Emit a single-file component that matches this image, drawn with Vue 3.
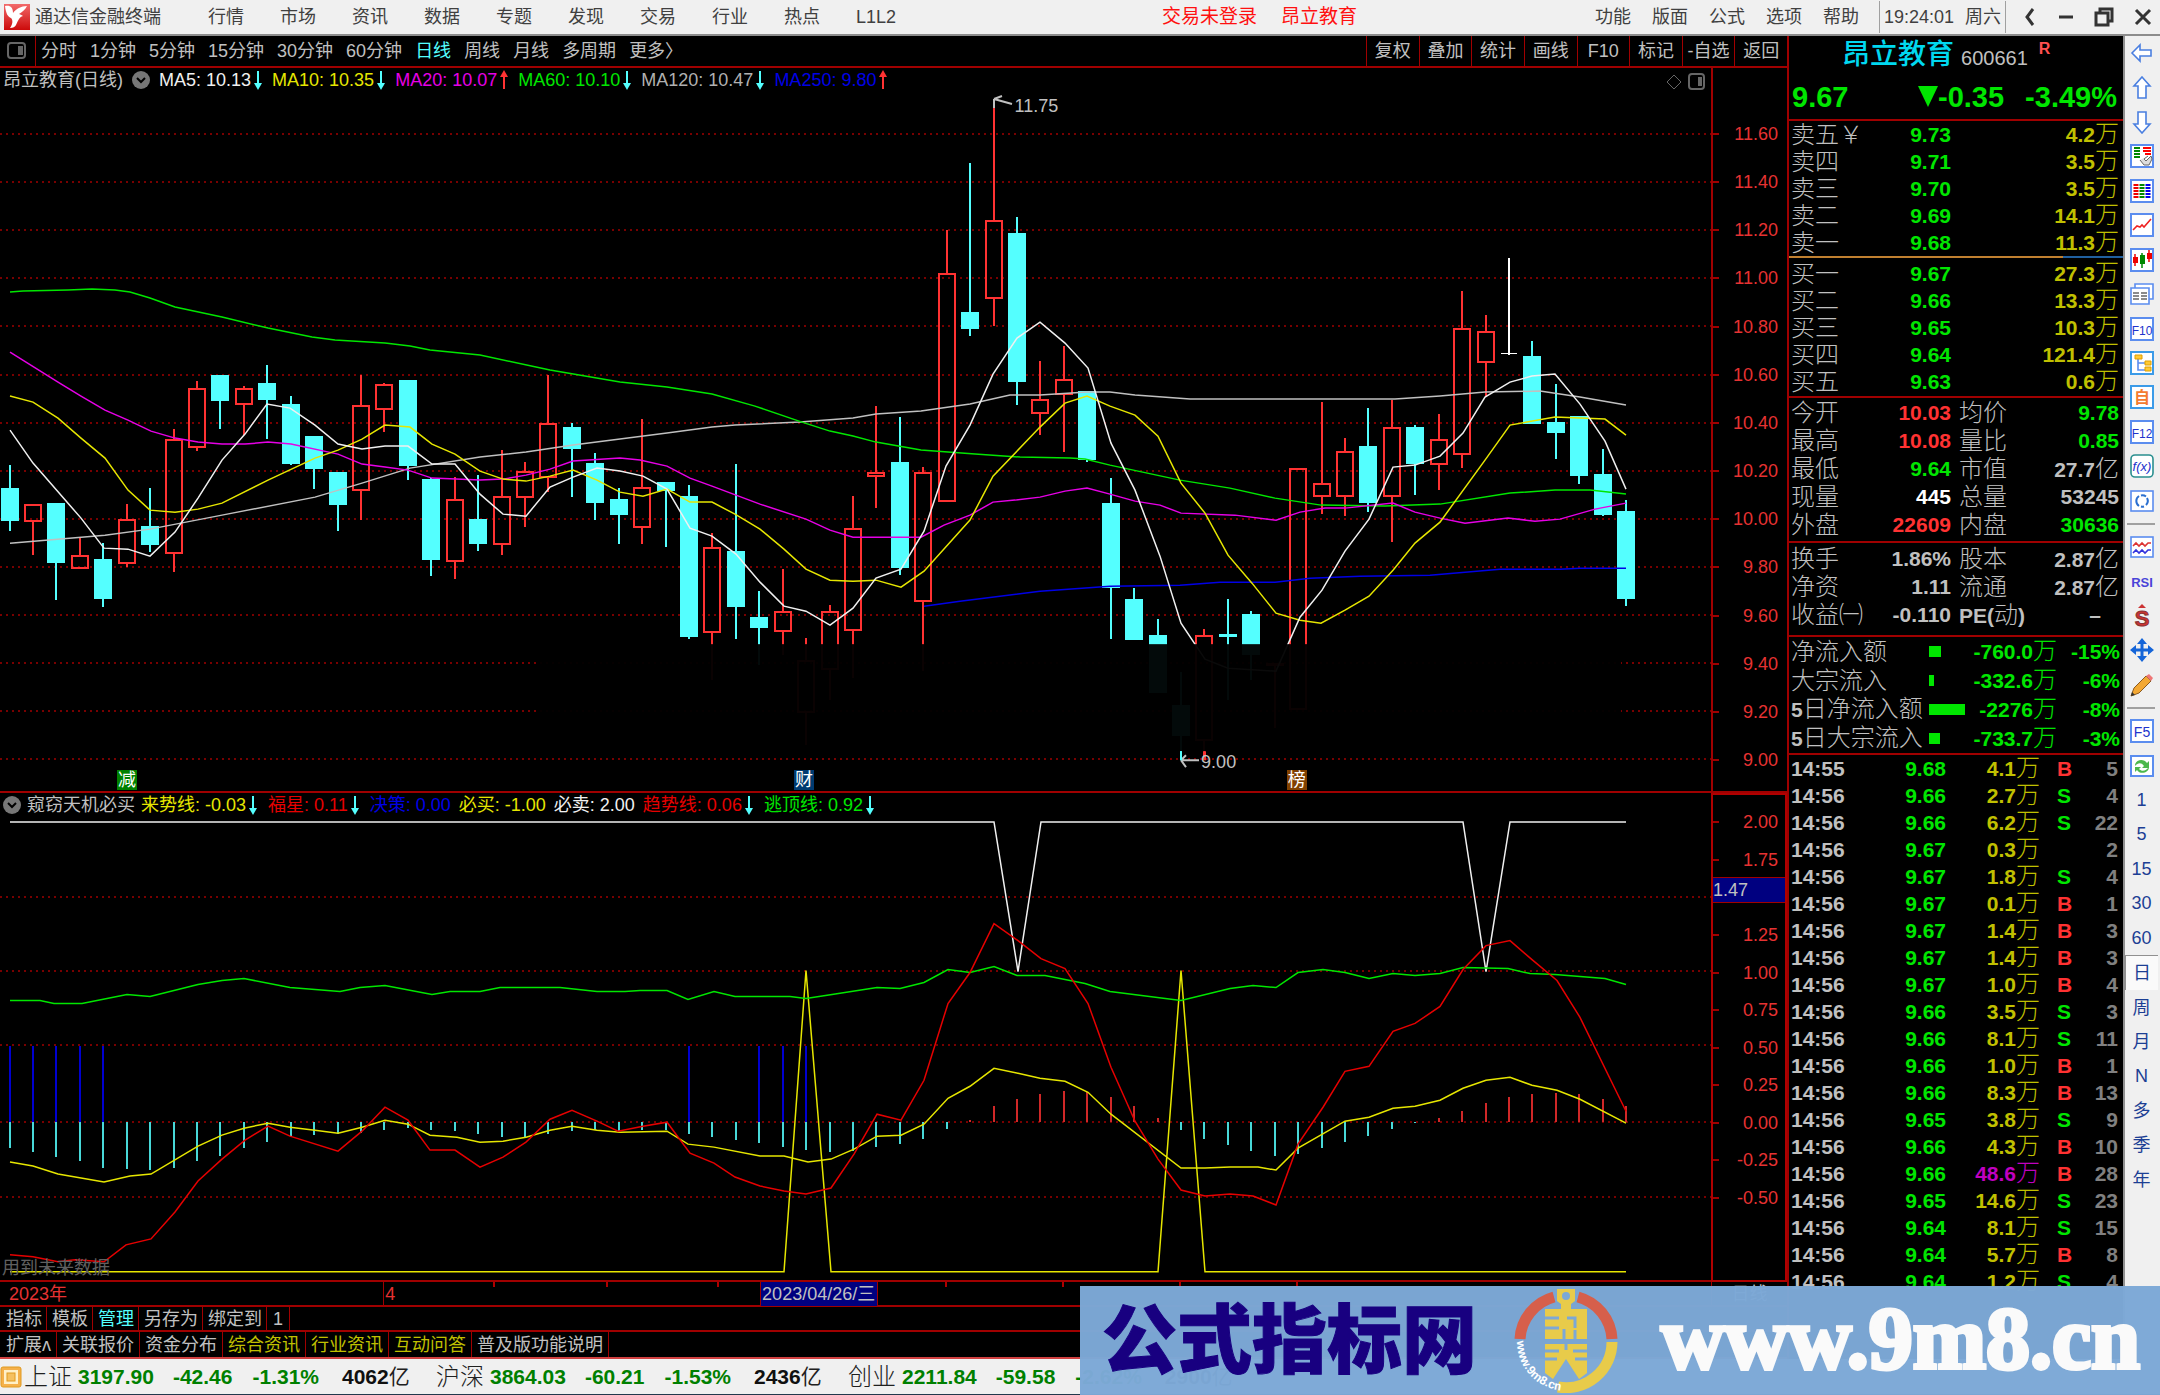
<template>
  <div class="terminal">
    <header class="menu-bar">
      <svg class="brand-icon" width="26" height="26" viewBox="0 0 26 26">
        <defs>
          <linearGradient id="brand-fill" x1="0" y1="0" x2="0" y2="1">
            <stop offset="0" stop-color="#f26a6a" />
            <stop offset="1" stop-color="#cc0a0a" />
          </linearGradient>
        </defs>
        <rect width="26" height="26" fill="url(#brand-fill)" />
        <path d="M1 2c5-1 8 1 8 7 3-4 8-7 14-7-2 4-5 6-8 8 2 1 3 1 4 2-4 1-5 5-7 9-1 2-3 3-6 3 3-4 3-8 1-10-3-1-5-4-6-12z" fill="#fff" />
      </svg>
      <span class="brand">通达信金融终端</span>
      <nav class="menus">
        <button v-for="m in menus" :key="m">{{ m }}</button>
      </nav>
      <div class="login">
        <span>交易未登录</span>
        <span>昂立教育</span>
      </div>
      <nav class="menus right">
        <button v-for="m in rightMenus" :key="m">{{ m }}</button>
      </nav>
      <div class="clock"><span>19:24:01</span><span>周六</span></div>
      <div class="window-buttons">
        <button aria-label="收起"><svg width="16" height="20" viewBox="0 0 16 20"><path d="M11 2L5 10l6 8" /></svg></button>
        <button aria-label="最小化"><svg width="16" height="20" viewBox="0 0 16 20"><path d="M1 10h14" /></svg></button>
        <button aria-label="还原"><svg width="20" height="20" viewBox="0 0 20 20"><path d="M6 6V2h12v12h-4M2 6h12v12H2z" /></svg></button>
        <button aria-label="关闭"><svg width="18" height="20" viewBox="0 0 18 20"><path d="M2 3l14 14M16 3L2 17" /></svg></button>
      </div>
    </header>

    <div class="body">
      <main class="workspace">
        <div class="toolbar">
          <button class="layout-toggle" aria-label="侧栏">
            <svg width="20" height="18" viewBox="0 0 20 18"><rect x="1" y="1" width="17" height="15" rx="3" fill="none" stroke="#666" stroke-width="2" /><rect x="11" y="4" width="5" height="9" fill="#666" /></svg>
          </button>
          <nav class="periods">
            <button v-for="p in periods" :key="p" :class="{ active: p === activePeriod }" @click="activePeriod = p">{{ p }}</button>
          </nav>
          <div class="tools">
            <button v-for="t in tools" :key="t">{{ t }}</button>
          </div>
        </div>

        <section class="pane main-pane">
          <div class="plot">
            <svg class="canvas" viewBox="0 68 1711 723" preserveAspectRatio="none">
              <line v-for="y in mainGrid" :key="y" class="grid" x1="0" x2="1711" :y1="y" :y2="y" />
              <g v-for="c in candleShapes" :key="c.x" :class="['candle', c.kind]">
                <line :x1="c.x" :x2="c.x" :y1="c.high" :y2="c.top" />
                <line :x1="c.x" :x2="c.x" :y1="c.bottom" :y2="c.low" />
                <rect :x="c.x - 8" :y="c.top" width="16" :height="c.height" />
              </g>
              <polyline v-for="l in mainLines" :key="l.color" class="curve" :points="l.points" :stroke="l.color" />
              <rect x="538" y="644" width="1083" height="107" fill="#000" opacity="0.96" />
              <path class="pointer" d="M994 99l18 5M994 99v9M994 99l8-3" />
              <path class="pointer" d="M1181 760h18M1181 760l5-5M1181 760l5 7" />
              <path d="M1181 751v9" stroke="#54ffff" stroke-width="2" />
              <path d="M1205 751v9" stroke="#ff3232" stroke-width="2" />
            </svg>
            <div class="legend">
              <span class="title">昂立教育(日线)</span>
              <button class="round" aria-label="指标菜单"><svg width="18" height="18" viewBox="0 0 18 18"><circle cx="9" cy="9" r="9" fill="#777" /><path d="M5 7l4 4 4-4" fill="none" stroke="#000" stroke-width="2" /></svg></button>
              <span v-for="l in mainLegend" :key="l.text" class="entry" :class="l.color">
                {{ l.text }}<svg v-if="l.dir" class="arrow" :class="l.dir" width="10" height="20" viewBox="0 0 10 20"><path d="M5 1v14" /><path class="tip" d="M1 13h8l-4 7z" /></svg>
              </span>
            </div>
            <div class="corner">
              <svg width="40" height="18" viewBox="0 0 40 18" fill="none" stroke="#666" stroke-width="2"><path d="M8 2l7 7-7 7-7-7z" stroke-width="1" /><rect x="23" y="1" width="15" height="15" rx="3" /><path d="M34 4v9" stroke-width="4" /></svg>
            </div>
            <span class="price-note high">11.75</span>
            <span class="price-note low">9.00</span>
            <span v-for="f in flags" :key="f.text" class="flag" :class="f.kind" :style="{ left: f.left }">{{ f.text }}</span>
          </div>
          <ul class="axis">
            <li v-for="v in mainAxis" :key="v">{{ v }}</li>
          </ul>
        </section>

        <section class="pane sub-pane">
          <div class="plot">
            <span class="future-note">用到未来数据</span>
            <svg class="canvas" viewBox="0 793 1711 488" preserveAspectRatio="none">
              <line v-for="y in subGrid" :key="y" class="grid" x1="0" x2="1711" :y1="y" :y2="y" />
              <line v-for="i in blueBars" :key="'b' + i" :x1="barX(i)" :x2="barX(i)" y1="1047" y2="1123" class="bar blue" />
              <line v-for="(y, i) in momentum" :key="i" :x1="barX(i)" :x2="barX(i)" y1="1123" :y2="y" class="bar" :class="y > 1123 ? 'down' : 'up'" />
              <polyline v-for="l in subLines" :key="l.points" class="curve" :points="l.points" :stroke="l.color" />
            </svg>
            <div class="legend">
              <button class="round" aria-label="指标菜单"><svg width="18" height="18" viewBox="0 0 18 18"><circle cx="9" cy="9" r="9" fill="#777" /><path d="M5 7l4 4 4-4" fill="none" stroke="#000" stroke-width="2" /></svg></button>
              <span class="title">窥窃天机必买</span>
              <span v-for="l in subLegend" :key="l.text" class="entry" :class="l.color">
                {{ l.text }}<svg v-if="l.dir" class="arrow" :class="l.dir" width="10" height="20" viewBox="0 0 10 20"><path d="M5 1v14" /><path class="tip" d="M1 13h8l-4 7z" /></svg>
              </span>
            </div>
          </div>
          <div class="axis-box">
            <ul class="axis">
              <li v-for="v in subAxis" :key="v">{{ v }}</li>
            </ul>
            <span class="cursor-value">1.47</span>
          </div>
        </section>

        <div class="date-row">
          <div class="dates">
            <span class="year">2023年</span>
            <span class="month">4</span>
            <span class="current">2023/04/26/三</span>
            <svg class="date-ticks" viewBox="0 0 1711 24" preserveAspectRatio="none"><path d="M494 0v5M607 0v5M718 0v5M946 0v5M1063 0v5M1180 0v5M1297 0v5" stroke="#b00000" stroke-width="2" /></svg>
          </div>
          <div class="date-end">日线</div>
        </div>
        <div class="tab-row first">
          <button v-for="t in indicatorTabs" :key="t" :class="{ active: t === '管理' }">{{ t }}</button>
        </div>
        <div class="tab-row second">
          <button v-for="t in infoTabs" :key="t.text" :class="{ hot: t.hot }">{{ t.text }}</button>
        </div>
      </main>

      <aside class="quote">
        <div class="stock-name">
          <h1>昂立教育</h1>
          <span class="code">600661</span>
          <sup>R</sup>
        </div>
        <div class="stock-price">
          <span>9.67</span>
          <span class="change"><svg width="20" height="21" viewBox="0 0 20 21"><path d="M0 0h20L10 21z" fill="#00e600" /></svg>-0.35</span>
          <span class="percent">-3.49%</span>
        </div>
        <table class="levels">
          <tbody>
            <tr v-for="r in sells" :key="r[0]">
              <th>{{ r[0] }}</th>
              <td class="green price">{{ r[1] }}</td>
              <td class="gold">{{ r[2] }}<i>万</i></td>
            </tr>
          </tbody>
        </table>
        <div class="balance"><span></span><span></span></div>
        <table class="levels buy">
          <tbody>
            <tr v-for="r in buys" :key="r[0]">
              <th>{{ r[0] }}</th>
              <td class="green price">{{ r[1] }}</td>
              <td class="gold">{{ r[2] }}<i>万</i></td>
            </tr>
          </tbody>
        </table>
        <table class="stats">
          <tbody>
            <tr v-for="r in stats" :key="r[0]">
              <th>{{ r[0] }}</th>
              <td :class="r[2]">{{ r[1] }}</td>
              <th>{{ r[3] }}</th>
              <td :class="r[5]">{{ r[4] }}<i v-if="r[6]">{{ r[6] }}</i></td>
            </tr>
          </tbody>
        </table>
        <table class="stats finance">
          <tbody>
            <tr>
              <th>换手</th><td>1.86%</td><th>股本</th><td>2.87<i>亿</i></td>
            </tr>
            <tr>
              <th>净资</th><td>1.11</td><th>流通</th><td>2.87<i>亿</i></td>
            </tr>
            <tr>
              <th>收益㈠</th><td>-0.110</td><th><b>PE(</b>动<b>)</b></th><td class="dash">–</td>
            </tr>
          </tbody>
        </table>
        <table class="flows">
          <tbody>
            <tr v-for="f in flows" :key="f.label">
              <th><b v-if="f.days">5</b>{{ f.label }}</th>
              <td class="meter"><span :style="{ width: f.bar + 'px' }"></span></td>
              <td class="green amount">{{ f.value }}<i>万</i></td>
              <td class="green">{{ f.pct }}</td>
            </tr>
          </tbody>
        </table>
        <div class="ticks">
          <table>
            <tbody>
              <tr v-for="(t, i) in trades" :key="i">
                <td class="time">{{ t[0] }}</td>
                <td class="green t-price">{{ t[1] }}</td>
                <td class="t-vol" :class="t[2] === '48.6' ? 'purple' : 'gold'">{{ t[2] }}<i>万</i></td>
                <td class="side" :class="t[3] === 'B' ? 'red' : 'green'">{{ t[3] }}</td>
                <td class="count">{{ t[4] }}</td>
              </tr>
            </tbody>
          </table>
        </div>
      </aside>

      <nav class="rail">
        <template v-for="(r, i) in rail" :key="i">
          <hr v-if="r.sep" />
          <button v-else-if="r.icon" :aria-label="r.label"><svg width="24" height="24" viewBox="0 0 24 24" v-html="r.icon"></svg></button>
          <button v-else class="rail-text" :class="{ pressed: r.text === '日' }">{{ r.text }}</button>
        </template>
      </nav>
    </div>

    <footer class="status-bar">
      <svg class="status-icon" width="22" height="22" viewBox="0 0 22 22"><rect x="1" y="1" width="20" height="20" rx="2" fill="#f5b04a" stroke="#e09a20" /><rect x="4" y="4" width="14" height="14" fill="#fff0c8" /><rect x="7" y="7" width="8" height="8" fill="#f5c060" stroke="#e09a20" /></svg>
      <div v-for="x in indexes" :key="x.name" class="index">
        <span class="index-name">{{ x.name }}</span>
        <b>{{ x.value }}</b>
        <b class="diff">{{ x.diff }}</b>
        <b class="pct">{{ x.pct }}</b>
        <span class="total"><b>{{ x.total }}</b>亿</span>
      </div>
    </footer>

    <div class="banner">
      <strong class="banner-title">公式指标网</strong>
      <svg class="banner-logo" width="104" height="104" viewBox="0 0 104 104">
        <defs><path id="logo-arc" d="M3 52A49 49 0 0 0 44 101" /></defs>
        <g fill="none" stroke-width="11">
          <path d="M6 50A46 46 0 0 1 40 8M64 8A46 46 0 0 1 98 50" stroke="#d65f4b" />
          <path d="M98 53A46 46 0 0 1 44 98" stroke="#e8cb4a" />
        </g>
        <path d="M43 0h18v12l-4 3v5h16v30H31V20h16v-5l-4-3z" fill="#e8cb4a" />
        <path d="M31 55h42v29l-8 6-13-20-13 20-8-6z" fill="#e8cb4a" />
        <circle cx="52" cy="7" r="4" fill="#7ca8d6" />
        <path d="M31 29h14M31 39h14M53 29h8v10M50 40v10M61 41v9M31 62h14M59 62h14M31 70h12M61 70h12M52 55v6" fill="none" stroke="#7ca8d6" stroke-width="3" />
        <text class="logo-text"><textPath href="#logo-arc">www.9m8.cn</textPath></text>
      </svg>
      <a class="banner-link" href="#">www.9m8.cn</a>
    </div>
  </div>
</template>

<script setup>
import { ref } from 'vue';

const menus = ['行情', '市场', '资讯', '数据', '专题', '发现', '交易', '行业', '热点', 'L1L2'];
const rightMenus = ['功能', '版面', '公式', '选项', '帮助'];
const periods = ['分时', '1分钟', '5分钟', '15分钟', '30分钟', '60分钟', '日线', '周线', '月线', '多周期', '更多〉'];
const activePeriod = ref('日线');
const tools = ['复权', '叠加', '统计', '画线', 'F10', '标记', '-自选', '返回'];

const mainLegend = [
  { text: 'MA5: 10.13', color: 'white', dir: 'down' },
  { text: 'MA10: 10.35', color: 'yellow', dir: 'down' },
  { text: 'MA20: 10.07', color: 'magenta', dir: 'up' },
  { text: 'MA60: 10.10', color: 'lime', dir: 'down' },
  { text: 'MA120: 10.47', color: 'gray', dir: 'down' },
  { text: 'MA250: 9.80', color: 'blue', dir: 'up' }
];

const subLegend = [
  { text: '来势线: -0.03', color: 'yellow', dir: 'down' },
  { text: '福星: 0.11', color: 'crimson', dir: 'down' },
  { text: '决策: 0.00', color: 'blue' },
  { text: '必买: -1.00', color: 'yellow' },
  { text: '必卖: 2.00', color: 'white' },
  { text: '趋势线: 0.06', color: 'crimson', dir: 'down' },
  { text: '逃顶线: 0.92', color: 'lime', dir: 'down' }
];

const mainAxis = ['11.60', '11.40', '11.20', '11.00', '10.80', '10.60', '10.40', '10.20', '10.00', '9.80', '9.60', '9.40', '9.20', '9.00'];
const subAxis = ['2.00', '1.75', '1.50', '1.25', '1.00', '0.75', '0.50', '0.25', '0.00', '-0.25', '-0.50'];
const mainGrid = mainAxis.map((_, i) => Math.round(134 + i * 48.1));
const subGrid = [897, 971, 1046, 1123, 1198];

const barX = (i) => Math.round(9.5 + i * 23.43);

// high, body top, body bottom, low, kind (d = down, u = up, f = flat)
const candles = [
  [465, 489, 520, 531, 'd'], [505, 505, 521, 555, 'u'], [504, 504, 562, 600, 'd'], [537, 556, 568, 568, 'u'],
  [543, 560, 598, 607, 'd'], [504, 520, 563, 567, 'u'], [488, 527, 544, 552, 'd'], [429, 440, 553, 572, 'u'],
  [381, 389, 447, 451, 'u'], [376, 376, 400, 429, 'd'], [386, 389, 404, 435, 'u'], [365, 384, 399, 439, 'd'],
  [396, 405, 463, 465, 'd'], [437, 437, 468, 489, 'd'], [473, 473, 504, 531, 'd'], [375, 406, 490, 520, 'u'],
  [383, 385, 409, 432, 'u'], [381, 381, 465, 480, 'd'], [478, 480, 559, 576, 'd'], [477, 500, 561, 579, 'u'],
  [475, 520, 543, 551, 'd'], [450, 497, 544, 555, 'u'], [462, 472, 497, 527, 'u'], [375, 424, 477, 492, 'u'],
  [423, 428, 448, 497, 'd'], [453, 464, 502, 520, 'd'], [488, 500, 514, 544, 'd'], [419, 488, 527, 544, 'u'],
  [483, 483, 490, 547, 'd'], [485, 497, 636, 639, 'd'], [533, 548, 632, 680, 'u'], [464, 552, 606, 639, 'd'],
  [591, 618, 627, 665, 'd'], [569, 612, 631, 655, 'u'], [638, 661, 712, 745, 'u'], [605, 612, 669, 700, 'u'],
  [496, 529, 630, 678, 'u'], [406, 473, 476, 508, 'u'], [417, 463, 567, 575, 'd'], [467, 473, 601, 671, 'u'],
  [230, 274, 501, 501, 'u'], [163, 313, 328, 336, 'd'], [101, 221, 298, 326, 'u'], [217, 234, 381, 405, 'd'],
  [361, 400, 413, 435, 'u'], [346, 380, 394, 452, 'u'], [392, 392, 459, 462, 'd'], [478, 504, 587, 639, 'd'],
  [588, 600, 639, 639, 'd'], [619, 636, 692, 692, 'd'], [672, 706, 735, 760, 'd'], [629, 636, 740, 760, 'u'],
  [599, 635, 635, 700, 'd'], [611, 615, 654, 680, 'd'], [664, 664, 664, 728, 'u'], [469, 469, 709, 709, 'u'],
  [402, 484, 496, 514, 'u'], [438, 452, 496, 516, 'u'], [408, 447, 502, 512, 'd'], [400, 428, 496, 542, 'u'],
  [425, 428, 463, 495, 'd'], [414, 440, 464, 490, 'u'], [291, 329, 454, 468, 'u'], [315, 332, 362, 396, 'u'],
  [258, 353, 353, 355, 'f'], [341, 357, 423, 424, 'd'], [384, 423, 432, 459, 'd'], [417, 417, 475, 484, 'd'],
  [449, 475, 514, 516, 'd'], [500, 512, 598, 606, 'd']
];
const kinds = { d: 'falling', u: 'rising', f: 'flat' };
const candleShapes = candles.map(([high, top, bottom, low, kind], i) => ({
  x: barX(i),
  high,
  top,
  bottom,
  low,
  height: Math.max(bottom - top, 1),
  kind: kinds[kind]
}));

const mainLines = [
  { color: '#c0c0c0', points: '10,543 105,535 150,529 222,515 315,497 362,483 410,468 480,457 526,452 573,445 667,433 712,427 735,425 800,422 853,418 876,414 921,411 970,404 1010,395 1040,395 1087,392 1110,392 1135,395 1190,399 1395,399 1440,396 1485,392 1540,391 1580,397 1626,405' },
  { color: '#0000e6', points: '924,606 960,601 1040,591 1110,586 1180,585 1220,582 1275,582 1310,578 1360,576 1430,575 1500,569 1560,569 1580,568 1626,568' },
  { color: '#00e600', points: '10,292 23,291 68,290 92,289 115,290 130,292 150,298 175,307 222,317 268,328 312,337 335,340 385,343 410,346 430,350 480,355 550,370 620,382 667,387 712,394 755,406 802,422 830,431 853,436 876,442 921,450 975,454 1020,457 1070,458 1085,459 1110,465 1180,480 1230,488 1275,498 1321,505 1385,506 1440,504 1510,493 1555,490 1590,490 1626,494' },
  { color: '#e600e6', points: '10,352 58,382 81,396 105,410 128,420 151,431 175,438 198,442 222,444 245,444 268,442 291,444 338,454 362,464 385,467 408,470 432,478 480,480 503,479 526,475 550,469 573,461 620,458 640,460 667,466 690,478 712,486 760,504 806,519 830,530 853,537 921,537 944,525 970,515 993,502 1015,500 1040,497 1065,491 1087,488 1110,494 1135,501 1160,505 1181,513 1235,515 1276,520 1300,512 1325,508 1345,508 1393,503 1415,512 1440,518 1465,523 1508,518 1535,521 1560,519 1595,509 1626,503' },
  { color: '#e6e600', points: '10,396 33,402 58,418 81,438 105,458 128,490 150,510 175,512 198,509 222,503 268,480 315,458 338,450 362,439 385,425 410,427 432,444 455,454 480,471 503,479 526,481 550,476 573,470 597,480 620,492 643,496 667,489 690,502 712,502 735,514 760,529 784,549 806,569 830,580 853,581 876,580 901,587 924,571 970,520 993,476 1040,427 1065,403 1087,396 1110,406 1135,415 1158,436 1181,483 1205,513 1228,555 1252,583 1276,613 1300,620 1321,623 1345,610 1369,596 1393,570 1415,543 1440,522 1485,460 1510,425 1555,417 1605,419 1626,435' },
  { color: '#f0f0f0', points: '10,430 33,463 81,518 104,548 128,549 150,556 175,532 198,498 222,460 245,434 267,404 290,408 315,425 338,444 362,449 385,446 408,446 432,464 455,464 480,494 503,514 526,516 550,487 573,477 597,468 620,471 643,476 667,489 690,528 712,536 736,554 760,582 784,606 806,611 830,625 853,608 876,578 901,569 924,531 946,466 970,425 993,374 1017,338 1040,322 1065,343 1088,368 1111,443 1135,490 1160,556 1181,623 1205,659 1228,668 1276,671 1300,617 1322,590 1345,551 1369,519 1393,467 1415,465 1440,456 1463,433 1485,397 1510,382 1532,376 1555,374 1580,404 1605,441 1626,489' }
];

const flags = [
  { text: '减', kind: 'cut', left: '6.84%' },
  { text: '财', kind: 'report', left: '46.4%' },
  { text: '榜', kind: 'board', left: '75.2%' }
];

const blueBars = [0, 1, 2, 3, 4, 29, 32, 33, 34];
const momentum = [
  1149, 1153, 1158, 1162, 1169, 1170, 1171, 1169, 1162, 1157, 1149, 1143, 1138, 1136, 1135, 1134, 1131, 1129,
  1131, 1132, 1135, 1138, 1138, 1135, 1132, 1131, 1132, 1131, 1131, 1135, 1138, 1141, 1144, 1148, 1151, 1153,
  1152, 1148, 1145, 1140, 1130, 1121, 1107, 1100, 1095, 1092, 1093, 1098, 1107, 1119, 1131, 1140, 1146, 1152,
  1157, 1155, 1149, 1143, 1137, 1130, 1124, 1119, 1112, 1104, 1098, 1095, 1094, 1095, 1100, 1107
];

const subLines = [
  { color: '#e6e600', points: '10,1273 784,1273 806,971 831,1273 1158,1273 1181,971 1205,1273 1626,1273' },
  { color: '#f0f0f0', points: '10,822 994,822 1018,972 1041,822 1463,822 1486,972 1510,822 1626,822' },
  { color: '#00e600', points: '10,1001 40,1001 54,1004 82,1004 127,995 150,997 198,985 222,981 244,979 290,988 340,992 360,988 385,986 432,995 450,992 480,992 500,988 560,988 597,992 625,992 640,991 667,991 688,1000 714,992 735,997 790,997 806,999 832,995 877,988 900,989 924,983 948,970 970,973 994,967 1017,976 1045,976 1085,984 1110,992 1181,1001 1230,989 1253,986 1276,988 1298,973 1323,970 1345,973 1369,979 1393,974 1415,976 1440,974 1463,968 1508,969 1530,974 1555,975 1605,979 1626,985' },
  { color: '#e6e600', points: '10,1163 33,1167 58,1175 104,1183 130,1177 151,1175 198,1147 222,1136 244,1129 268,1124 290,1128 315,1131 338,1134 362,1128 385,1121 408,1125 430,1136 457,1138 480,1143 503,1142 526,1138 550,1131 572,1127 597,1131 620,1133 667,1132 688,1145 714,1148 760,1157 784,1157 808,1163 831,1160 854,1150 877,1137 901,1136 924,1125 948,1099 970,1087 994,1069 1018,1074 1040,1079 1065,1082 1088,1093 1111,1115 1181,1169 1205,1169 1230,1168 1258,1168 1276,1171 1298,1149 1345,1122 1369,1118 1393,1109 1415,1107 1440,1101 1463,1089 1486,1081 1510,1078 1532,1086 1557,1091 1580,1100 1626,1124' },
  { color: '#e60000', points: '10,1256 33,1258 58,1263 75,1261 104,1263 126,1246 151,1240 175,1213 198,1182 222,1160 245,1141 268,1127 290,1137 338,1152 362,1132 385,1108 408,1121 430,1151 455,1151 480,1168 503,1158 526,1143 550,1120 572,1111 597,1122 618,1132 643,1127 667,1123 690,1154 714,1164 735,1178 760,1187 784,1192 806,1195 831,1189 854,1155 877,1115 901,1121 924,1081 948,1004 970,973 994,924 1018,941 1041,959 1065,969 1088,1004 1111,1068 1135,1122 1158,1160 1181,1191 1205,1197 1230,1195 1253,1197 1276,1206 1298,1145 1323,1108 1345,1072 1369,1067 1393,1032 1415,1024 1440,1007 1463,970 1486,946 1510,941 1532,960 1557,981 1580,1018 1626,1112' }
];

const indicatorTabs = ['指标', '模板', '管理', '另存为', '绑定到', '1'];
const infoTabs = [
  { text: '扩展ʌ' },
  { text: '关联报价' },
  { text: '资金分布' },
  { text: '综合资讯', hot: true },
  { text: '行业资讯', hot: true },
  { text: '互动问答', hot: true },
  { text: '普及版功能说明' }
];

const sells = [['卖五￥', '9.73', '4.2'], ['卖四', '9.71', '3.5'], ['卖三', '9.70', '3.5'], ['卖二', '9.69', '14.1'], ['卖一', '9.68', '11.3']];
const buys = [['买一', '9.67', '27.3'], ['买二', '9.66', '13.3'], ['买三', '9.65', '10.3'], ['买四', '9.64', '121.4'], ['买五', '9.63', '0.6']];

const stats = [
  ['今开', '10.03', 'red', '均价', '9.78', 'green'],
  ['最高', '10.08', 'red', '量比', '0.85', 'green'],
  ['最低', '9.64', 'green', '市值', '27.7', '', '亿'],
  ['现量', '445', 'bright', '总量', '53245', ''],
  ['外盘', '22609', 'red', '内盘', '30636', 'green']
];

const flows = [
  { label: '净流入额', bar: 12, value: '-760.0', pct: '-15%' },
  { label: '大宗流入', bar: 5, value: '-332.6', pct: '-6%' },
  { label: '日净流入额', days: true, bar: 36, value: '-2276', pct: '-8%' },
  { label: '日大宗流入', days: true, bar: 11, value: '-733.7', pct: '-3%' }
];

const trades = [
  ['14:55', '9.68', '4.1', 'B', 5], ['14:56', '9.66', '2.7', 'S', 4], ['14:56', '9.66', '6.2', 'S', 22],
  ['14:56', '9.67', '0.3', '', 2], ['14:56', '9.67', '1.8', 'S', 4], ['14:56', '9.67', '0.1', 'B', 1],
  ['14:56', '9.67', '1.4', 'B', 3], ['14:56', '9.67', '1.4', 'B', 3], ['14:56', '9.67', '1.0', 'B', 4],
  ['14:56', '9.66', '3.5', 'S', 3], ['14:56', '9.66', '8.1', 'S', 11], ['14:56', '9.66', '1.0', 'B', 1],
  ['14:56', '9.66', '8.3', 'B', 13], ['14:56', '9.65', '3.8', 'S', 9], ['14:56', '9.66', '4.3', 'B', 10],
  ['14:56', '9.66', '48.6', 'B', 28], ['14:56', '9.65', '14.6', 'S', 23], ['14:56', '9.64', '8.1', 'S', 15],
  ['14:56', '9.64', '5.7', 'B', 8], ['14:56', '9.64', '1.2', 'S', 4]
];

const indexes = [
  { name: '上证', value: '3197.90', diff: '-42.46', pct: '-1.31%', total: '4062' },
  { name: '沪深', value: '3864.03', diff: '-60.21', pct: '-1.53%', total: '2436' },
  { name: '创业', value: '2211.84', diff: '-59.58', pct: '-2.62%', total: '2900' }
];

const frame = (stroke = '#5b8def') => `<rect x="1" y="1" width="22" height="22" fill="#fff" stroke="${stroke}" stroke-width="2"/>`;
const boxText = (t, size) => `${frame()}<text x="12" y="18" text-anchor="middle" font-size="${size}" fill="#2233cc">${t}</text>`;
const rail = [
  { label: '后退', icon: '<path d="M2 12l8-8v5h11v6H10v5z" fill="#fff" stroke="#4a7fe0" stroke-width="1.6"/>' },
  { label: '上移', icon: '<path d="M12 1l8 9h-4v12H8V10H4z" fill="#fff" stroke="#4a7fe0" stroke-width="1.6"/>' },
  { label: '下移', icon: '<path d="M12 23l8-9h-4V2H8v12H4z" fill="#fff" stroke="#4a7fe0" stroke-width="1.6"/>' },
  { label: '报价', icon: frame() + '<path d="M4 4h6M4 7h6M4 10h6M4 13h6" stroke="#080" stroke-width="2"/><path d="M13 4h8M13 7h8M15 10h6" stroke="#f00" stroke-width="2"/><path d="M10 16l4 5h5l3-6-1-3-5 5-2-2 4-3" fill="#ddd" stroke="#666"/>' },
  { label: '列表', icon: frame() + '<g stroke-width="5" stroke-dasharray="2 1"><path d="M6 5v14" stroke="#e00"/><path d="M12 5v14" stroke="#080"/><path d="M18 5v14" stroke="#00e"/></g>' },
  { label: '分时图', icon: frame() + '<path d="M3 17l4-4 3 1 2-2 2 2 7-8" fill="none" stroke="#e22" stroke-width="1.6"/>' },
  { label: 'K线图', icon: frame() + '<path d="M5 6v12M19 2v12" stroke="#e00" stroke-width="1.5"/><path d="M12 5v15" stroke="#080" stroke-width="1.5"/><path d="M3 9h5v6H3zM17 5h5v6h-5z" fill="#e00"/><path d="M10 7h5v9h-5z" fill="#080"/>' },
  { label: '资讯', icon: '<path d="M5 2h18v15H5z" fill="#fff" stroke="#5b8def" stroke-width="1.6"/><path d="M1 6h18v16H1z" fill="#fff" stroke="#5b8def" stroke-width="1.6"/><path d="M3 11h6M3 14h6M3 17h6M11 11h6M11 14h6M11 17h6" stroke="#666" stroke-width="1.6"/>' },
  { label: 'F10', icon: boxText('F10', 12) },
  { label: '树形', icon: frame('#3b9be8') + '<path d="M8 8v11h7M8 12h7" fill="none" stroke="#5b8def" stroke-width="1.6"/><path d="M5 4h7v4H5zM15 10h6v4h-6zM15 16h6v4h-6z" fill="#ffc933" stroke="#e0a000"/>' },
  { label: '自选', icon: frame('#3b9be8') + '<text x="12" y="18" text-anchor="middle" font-size="16" font-weight="bold" fill="#f47b30">自</text>' },
  { label: 'F12', icon: boxText('F12', 12) },
  { label: '公式', icon: '<rect x="1" y="1" width="22" height="22" rx="4" fill="#fff" stroke="#2a8f8f" stroke-width="1.6"/><text x="12" y="17" text-anchor="middle" font-size="13" font-style="italic" fill="#2233cc">f(x)</text>' },
  { label: '循环', icon: '<rect x="1" y="2" width="22" height="20" fill="#fff" stroke="#5b8def" stroke-width="1.6"/><path d="M9 17a6 6 0 0 1 0-10M11 6.500a6 6 0 0 1 5 1M17 9a6 6 0 0 1-1 7M14 17.500a6 6 0 0 1-3 0" fill="none" stroke="#2a6fd0" stroke-width="2"/>' },
  { sep: true },
  { label: '波动', icon: '<rect x="1" y="2" width="22" height="20" fill="#fff" stroke="#5b8def" stroke-width="1.6"/><path d="M3 11l3-3 3 3 3-3 3 3 3-3 3 0" fill="none" stroke="#d33" stroke-width="1.6"/><path d="M3 18l3-3 3 3 3-3 3 3 3-3 3 0" fill="none" stroke="#33d" stroke-width="1.6"/>' },
  { label: 'RSI', icon: '<text x="12" y="17" text-anchor="middle" font-size="13" font-weight="bold" fill="#4a44d8">RSI</text>' },
  { label: '资金', icon: '<text x="12" y="22" text-anchor="middle" font-size="22" font-weight="bold" fill="#c33" stroke="#833">S</text><path d="M8 4l4-4 4 4z" fill="#c33"/>' },
  { label: '移动', icon: '<path d="M12 0l5 6H7zM12 24l5-6H7zM0 12l6-5v10zM24 12l-6-5v10z" fill="#1565d8"/><path d="M12 5v14M5 12h14" stroke="#1565d8" stroke-width="3"/>' },
  { label: '画笔', icon: '<path d="M1 23l3-8L16 3l5 5L9 20z" fill="#f3a833" stroke="#8a5a20"/><path d="M16 3l3-2 4 4-2 3z" fill="#e77"/><path d="M1 23l1-4 3 3z" fill="#333"/>' },
  { sep: true },
  { label: 'F5', icon: boxText('F5', 14) },
  { label: '刷新', icon: '<rect x="1" y="2" width="22" height="20" fill="#fff" stroke="#5b8def" stroke-width="2"/><path d="M5 12c0-7 9-8 12-3l2-2v7h-7l2-2c-3-4-6-3-9 0zM19 13c0 6-9 8-12 3l-2 2v-5h6l-2 2c3 3 7 2 10-2z" fill="#4cb84c"/>' },
  ...['1', '5', '15', '30', '60', '日', '周', '月', 'N', '多', '季', '年'].map((text) => ({ text }))
];
</script>

<style>
body {
  background: #000;
}
</style>

<style scoped>
.terminal {
  position: relative;
  display: flex;
  flex-direction: column;
  height: 100vh;
  overflow: hidden;
  background: #000;
  color: #c0c0c0;
  font-family: "Liberation Sans", "Noto Sans CJK SC", sans-serif;
  font-size: 18px;
  line-height: 24px;
}

.terminal * {
  box-sizing: border-box;
}

button {
  padding: 0;
  border: none;
  background: none;
  color: inherit;
  font: inherit;
  white-space: nowrap;
  cursor: pointer;
}

svg {
  display: block;
  flex: none;
}

table {
  width: 100%;
  border-collapse: collapse;
}

th,
td {
  padding: 0;
}

i {
  font-style: normal;
}

/* menu bar */
.menu-bar {
  display: flex;
  flex: none;
  align-items: center;
  height: 36px;
  padding-left: 4px;
  background: #f0f0f0;
  border-bottom: 2px solid #8c8c8c;
  color: #404040;
}

.brand {
  margin: 0 47px 0 5px;
}

.menus {
  display: flex;
  gap: 36px;
}

.menus.right {
  gap: 21px;
}

.login {
  display: flex;
  gap: 24px;
  margin-left: auto;
  margin-right: 238px;
  color: #ff1010;
  font-size: 19px;
}

.clock {
  display: flex;
  align-items: center;
  gap: 11px;
  height: 32px;
  margin-left: 20px;
  padding: 0 4px;
  border-left: 1px solid #a0a0a0;
  border-right: 1px solid #a0a0a0;
}

.window-buttons {
  display: flex;
  align-items: center;
  gap: 20px;
  padding: 0 8px 0 16px;
}

.window-buttons path {
  fill: none;
  stroke: #333;
  stroke-width: 3;
}

.body {
  display: flex;
  flex: 1;
  min-height: 0;
}

.workspace {
  display: flex;
  flex: 1;
  flex-direction: column;
  min-width: 0;
}

/* toolbar */
.toolbar {
  display: flex;
  flex: none;
  height: 32px;
  border-bottom: 2px solid #a00000;
}

.layout-toggle {
  display: flex;
  align-items: center;
  width: 36px;
  padding-left: 7px;
  border-right: 1px solid #a00000;
}

.periods {
  display: flex;
  flex: 1;
  gap: 13px;
  padding-left: 5px;
}

.periods .active {
  color: #54ffff;
}

.tools {
  display: flex;
  width: 421px;
}

.tools button {
  flex: 1;
  border-left: 1px solid #a00000;
}

/* chart panes */
.pane {
  display: grid;
  grid-template-columns: minmax(0, 1fr) 76px;
  min-height: 0;
}

.main-pane {
  flex: 725 1 0;
  border-bottom: 2px solid #a00000;
}

.sub-pane {
  flex: 490 1 0;
}

.plot {
  position: relative;
  display: grid;
  grid-template: minmax(0, 1fr) / minmax(0, 1fr);
  min-height: 0;
}

.canvas,
.legend {
  grid-area: 1 / 1;
}

.canvas {
  width: 100%;
  height: 100%;
  min-height: 0;
}

.sub-pane .plot {
  border-bottom: 2px solid #a00000;
}

.grid {
  stroke: #780000;
  stroke-width: 2;
  stroke-dasharray: 2 4;
  shape-rendering: crispEdges;
}

.curve {
  fill: none;
  stroke-width: 1.5;
}

.candle line,
.candle rect {
  stroke-width: 1.5;
  shape-rendering: crispEdges;
}

.rising line,
.rising rect {
  fill: none;
  stroke: #ff3232;
}

.falling line,
.falling rect {
  fill: #54ffff;
  stroke: #54ffff;
}

.flat line,
.flat rect {
  fill: #fff;
  stroke: #fff;
}

.flat rect {
  stroke: none;
}

.pointer {
  fill: none;
  stroke: #c0c0c0;
  stroke-width: 2;
}

.bar {
  stroke-width: 2;
  shape-rendering: crispEdges;
}

.bar.blue {
  stroke: #0000d0;
}

.bar.down {
  stroke: #48d8d8;
}

.bar.up {
  stroke: #d02828;
}

.legend {
  display: flex;
  align-items: center;
  align-self: start;
  gap: 9px;
  padding-left: 3px;
  white-space: nowrap;
}

.sub-pane .legend {
  gap: 6px;
}

.sub-pane .entry {
  margin-right: 2px;
}

.entry {
  display: flex;
  align-items: center;
}

.arrow {
  margin-left: 2px;
}

.sub-pane .arrow {
  margin-right: 2px;
}

.arrow path {
  stroke: #54ffff;
  stroke-width: 2;
}

.arrow .tip {
  fill: #54ffff;
  stroke: none;
}

.arrow.up {
  transform: rotate(180deg);
}

.arrow.up path {
  stroke: #ff3232;
}

.arrow.up .tip {
  fill: #ff3232;
  stroke: none;
}

.white { color: #f0f0f0; }
.yellow { color: #e6e600; }
.magenta { color: #e600e6; }
.lime { color: #00e600; }
.gray { color: #b0b0b0; }
.blue { color: #0000e6; }
.crimson { color: #e60000; }

.corner {
  position: absolute;
  top: 5px;
  right: 5px;
}

.price-note {
  position: absolute;
}

.price-note.high {
  top: 26px;
  left: 59.3%;
}

.price-note.low {
  bottom: 17px;
  left: 70.2%;
}

.flag {
  position: absolute;
  bottom: 1px;
  width: 20px;
  height: 20px;
  color: #fff;
  line-height: 20px;
  text-align: center;
}

.flag.cut { background: #008000; }
.flag.report { background: #003a70; }
.flag.board { background: #804000; }

.future-note {
  position: absolute;
  bottom: 0;
  left: 2px;
  color: #606060;
}

.axis {
  display: flex;
  flex-direction: column;
  justify-content: space-between;
  height: 100%;
  margin: 0;
  padding: 54px 9px 19px 0;
  border-left: 2px solid #a00000;
  list-style: none;
  color: #e63232;
}

.axis li {
  display: flex;
  align-items: center;
  justify-content: space-between;
}

.axis li::before {
  content: "";
  width: 6px;
  height: 2px;
  background: #a00000;
}

.axis-box {
  position: relative;
  min-height: 0;
  border: 2px solid #b00000;
}

.axis-box .axis {
  padding: 15px 7px 70px 0;
  border-left: none;
}

.cursor-value {
  position: absolute;
  top: 82px;
  left: 0;
  right: 0;
  background: #000080;
  border-top: 1px solid #a00000;
  border-bottom: 1px solid #a00000;
}

/* date row and tabs */
.date-row {
  display: grid;
  flex: none;
  grid-template-columns: minmax(0, 1fr) 76px;
  height: 25px;
  border-bottom: 2px solid #a00000;
  color: #e63232;
}

.dates {
  display: flex;
  position: relative;
}

.year {
  width: 22.4%;
  padding-left: 9px;
}

.month {
  width: 22%;
  padding-left: 1px;
  border-left: 1px solid #a00000;
}

.current {
  width: 118px;
  background: #000080;
  border-left: 1px solid #a00000;
  border-right: 1px solid #a00000;
  color: #c0c0c0;
  text-align: center;
  white-space: nowrap;
}

.date-ticks {
  position: absolute;
  inset: 0;
  width: 100%;
  height: 100%;
}

.date-end {
  border-left: 1px solid #a00000;
  color: #c0c0c0;
  text-align: center;
}

.tab-row {
  display: flex;
  flex: none;
  padding-left: 1px;
}

.tab-row.first {
  height: 25px;
  border-bottom: 2px solid #a00000;
}

.tab-row.second {
  height: 27px;
  border-bottom: 2px solid #d04040;
}

.tab-row button {
  padding: 0 5px;
  border-right: 1px solid #a00000;
}

.tab-row.first button {
  padding: 0 4px 0 5px;
}

.tab-row.first button:last-child {
  padding: 0 6px;
}

.tab-row .active {
  color: #54ffff;
}

.tab-row .hot {
  color: #c0c000;
}

/* quote panel */
.quote {
  display: flex;
  flex: none;
  flex-direction: column;
  width: 336px;
  border-left: 2px solid #a00000;
  font-size: 21px;
  font-weight: bold;
}

.stock-name {
  display: flex;
  align-items: center;
  gap: 7px;
  height: 38px;
  padding-left: 53px;
}

h1 {
  margin: 0;
  color: #00d8f0;
  font-size: 28px;
  font-weight: 500;
}

.code {
  padding-top: 6px;
  font-size: 20px;
  font-weight: normal;
}

sup {
  padding: 0 0 12px 4px;
  color: #ff5050;
  font-size: 16px;
}

.stock-price {
  display: flex;
  align-items: center;
  height: 47px;
  padding: 0 6px 0 3px;
  border-bottom: 2px solid #a00000;
  color: #00e600;
  font-size: 29px;
}

.change {
  display: flex;
  align-items: center;
  margin-left: auto;
}

.percent {
  margin-left: 21px;
}

.quote th {
  text-align: left;
  font-size: 24px;
  font-weight: 300;
  white-space: nowrap;
}

.quote td {
  text-align: right;
  white-space: nowrap;
}

.quote i {
  font-size: 24px;
  font-weight: 300;
}

.quote th b {
  font-size: 21px;
  font-weight: bold;
}

.green { color: #00e600; }
.red { color: #ff3232; }
.gold { color: #c0c000; }
.purple { color: #c000c0; }
.bright { color: #fff; }

.levels,
.stats,
.flows {
  table-layout: fixed;
}

.levels tr {
  height: 27px;
}

.levels th {
  width: 100px;
  padding-left: 2px;
}

.levels .price {
  width: 62px;
}

.levels td {
  padding-right: 4px;
}

.levels .price,
.stats td:nth-child(2) {
  padding-right: 0;
}

.balance {
  display: flex;
  height: 2px;
}

.balance span {
  flex: 275;
  background: #c08030;
}

.balance span:last-child {
  flex: 60;
  background: #2060a0;
}

.buy {
  margin: 2px 0 1px;
}

.stats,
.flows,
.ticks {
  border-top: 2px solid #a00000;
}

.quote table.stats,
.quote table.flows {
  border-collapse: separate;
  border-spacing: 0;
}

.stats {
  padding: 1px 0 2px;
}

.stats tr {
  height: 28px;
}

.stats th {
  width: 80px;
  padding-left: 2px;
}

.stats th:nth-child(3) {
  width: 90px;
  padding-left: 8px;
}

.stats td {
  padding-right: 4px;
}

.stats td:nth-child(2) {
  width: 82px;
}

.finance {
  padding: 2px 0 6px;
}

.stats .dash {
  padding-right: 22px;
}

.flows tr {
  height: 29px;
}

.flows th {
  width: 140px;
  padding-left: 2px;
}

.flows .meter {
  width: 38px;
}

.meter span {
  display: block;
  height: 11px;
  background: #00e600;
}

.flows .amount {
  width: 90px;
}

.flows td:last-child {
  padding-right: 3px;
}

.ticks {
  flex: 1;
  min-height: 0;
  overflow: hidden;
}

.ticks tr {
  height: 27px;
}

.quote .time {
  width: 60px;
  padding-left: 2px;
  text-align: left;
}

.t-price {
  width: 97px;
}

.t-vol {
  width: 94px;
}

.quote .side {
  width: 48px;
  padding-left: 17px;
  text-align: left;
}

.quote .count {
  padding-right: 5px;
  color: #808080;
}

/* right icon rail */
.rail {
  display: flex;
  flex: none;
  flex-direction: column;
  width: 37px;
  padding: 0 2px 162px 0;
  background: #f0f0f0;
  border-left: 2px solid #909090;
}

.rail button {
  display: flex;
  flex: 1;
  align-items: center;
  justify-content: center;
  min-height: 0;
}

.rail hr {
  flex: none;
  width: 28px;
  height: 2px;
  margin: 5px 2px;
  border: none;
  background: #a0a0a0;
}

.rail-text {
  color: #1c3f94;
}

.rail .pressed {
  background: #fafafa;
  border: 1px solid #909090;
  border-right: none;
  border-bottom: none;
}

/* index ticker */
.status-bar {
  display: flex;
  flex: none;
  align-items: center;
  gap: 2px;
  height: 36px;
  background: #f0f0f0;
  border-bottom: 1px solid #20384c;
  color: #202020;
  font-size: 21px;
  white-space: nowrap;
}

.index {
  display: flex;
  align-items: center;
  width: 410px;
  color: #008000;
}

.index-name {
  margin-right: 6px;
  color: #202020;
  font-size: 24px;
  font-weight: 300;
}

.diff {
  margin-left: 19px;
}

.pct {
  margin-left: 20px;
}

.total {
  margin-left: 23px;
  color: #202020;
}

.total b {
  color: #101010;
}

/* banner over the bottom right corner */
.banner {
  position: absolute;
  right: 0;
  bottom: 0;
  display: flex;
  align-items: center;
  width: 50%;
  height: 109px;
  padding: 0 20px 0 22px;
  background: rgba(124, 168, 214, 0.98);
  white-space: nowrap;
}

.banner-title {
  color: #180080;
  font-size: 75px;
  font-weight: 900;
  line-height: 100px;
  -webkit-text-stroke: 1px #180080;
}

.banner-logo {
  margin-left: 37px;
}

.logo-text {
  fill: #fff;
  font-size: 12px;
  font-weight: bold;
}

.banner-link {
  margin-left: auto;
  padding-bottom: 4px;
  color: #fafafa;
  font-family: "Liberation Serif", serif;
  font-size: 88px;
  font-weight: bold;
  line-height: 100px;
  text-decoration: none;
  -webkit-text-stroke: 4px #fafafa;
}
</style>
